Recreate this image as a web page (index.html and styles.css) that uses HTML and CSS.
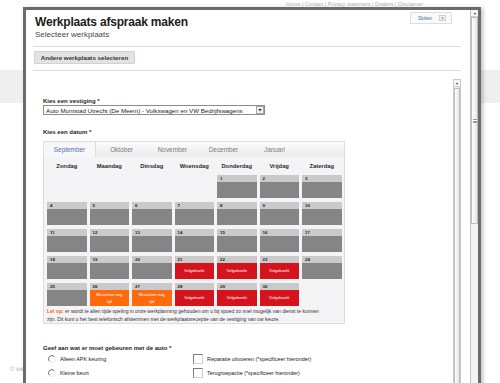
FILE: index.html
```html
<!DOCTYPE html>
<html lang="nl">
<head>
<meta charset="utf-8">
<title>Werkplaats afspraak maken</title>
<link rel="stylesheet" href="styles.css">
</head>
<body>
<div class="page">
  <div class="topnav">Home | Contact | Privacy statement | Dealers | Disclaimer</div>
  <div class="band"></div>
  <div class="copyright">© Volkswagen</div>
</div>

<div class="dialog">
  <div class="dialog-main">
    <div class="dlg-head">
      <div class="titles">
        <div class="title">Werkplaats afspraak maken</div>
        <div class="subtitle">Selecteer werkplaats</div>
      </div>
      <div class="close-btn"><span>Sluiten</span><span class="close-x">×</span></div>
    </div>
    <div class="rule"></div>
    <div class="btn">Andere werkplaats selecteren</div>
    <div class="rule rule-2"></div>

    <div class="scroll-area">
      <div class="content">
        <div class="label">Kies een vestiging *</div>
        <div class="select">
          <span class="select-text">Auto Muntstad Utrecht (De Meem) - Volkswagen en VW Bedrijfswagens</span>
          <span class="select-arrow"><svg width="6" height="6" viewBox="0 0 6 6"><path d="M1.2 2 L4.8 2 L3 4.2 Z" fill="#333"/></svg></span>
        </div>

        <div class="label label-date">Kies een datum *</div>
        <div class="tabs">
          <div class="tab active">September</div>
          <div class="tab">Oktober</div>
          <div class="tab">November</div>
          <div class="tab">December</div>
          <div class="tab">Januari</div>
        </div>
        <div class="calendar">
          <div class="dow">
            <div>Zondag</div><div>Maandag</div><div>Dinsdag</div><div>Woensdag</div><div>Donderdag</div><div>Vrijdag</div><div>Zaterdag</div>
          </div>
          <div class="days">
            <div class="empty"></div><div class="empty"></div><div class="empty"></div><div class="empty"></div>
            <div class="day"><div class="num">1</div><div class="body"></div></div>
            <div class="day"><div class="num">2</div><div class="body"></div></div>
            <div class="day"><div class="num">3</div><div class="body"></div></div>

            <div class="day"><div class="num">4</div><div class="body"></div></div>
            <div class="day"><div class="num">5</div><div class="body"></div></div>
            <div class="day"><div class="num">6</div><div class="body"></div></div>
            <div class="day"><div class="num">7</div><div class="body"></div></div>
            <div class="day"><div class="num">8</div><div class="body"></div></div>
            <div class="day"><div class="num">9</div><div class="body"></div></div>
            <div class="day"><div class="num">10</div><div class="body"></div></div>

            <div class="day"><div class="num">11</div><div class="body"></div></div>
            <div class="day"><div class="num">12</div><div class="body"></div></div>
            <div class="day"><div class="num">13</div><div class="body"></div></div>
            <div class="day"><div class="num">14</div><div class="body"></div></div>
            <div class="day"><div class="num">15</div><div class="body"></div></div>
            <div class="day"><div class="num">16</div><div class="body"></div></div>
            <div class="day"><div class="num">17</div><div class="body"></div></div>

            <div class="day"><div class="num">18</div><div class="body"></div></div>
            <div class="day"><div class="num">19</div><div class="body"></div></div>
            <div class="day"><div class="num">20</div><div class="body"></div></div>
            <div class="day"><div class="num">21</div><div class="body full">Volgeboekt</div></div>
            <div class="day"><div class="num">22</div><div class="body full">Volgeboekt</div></div>
            <div class="day"><div class="num">23</div><div class="body full">Volgeboekt</div></div>
            <div class="day"><div class="num">24</div><div class="body"></div></div>

            <div class="day"><div class="num">25</div><div class="body"></div></div>
            <div class="day"><div class="num">26</div><div class="body maybe">Misschien nog<br>tijd</div></div>
            <div class="day"><div class="num">27</div><div class="body maybe">Misschien nog<br>tijd</div></div>
            <div class="day"><div class="num">28</div><div class="body full">Volgeboekt</div></div>
            <div class="day"><div class="num">29</div><div class="body full">Volgeboekt</div></div>
            <div class="day"><div class="num">30</div><div class="body full">Volgeboekt</div></div>
            <div class="empty"></div>
          </div>
          <div class="note"><b>Let op:</b> er wordt te allen tijde speling in onze werkplanning gehouden om u bij spoed zo snel mogelijk van dienst te kunnen<br>zijn. Dit kunt u het best telefonisch afstemmen met de werkplaatsreceptie van de vestiging van uw keuze.</div>
        </div>

        <div class="label label-work">Geef aan wat er moet gebeuren met de auto *</div>
        <div class="opts">
          <div class="opt"><svg class="radio" width="8" height="8" viewBox="0 0 8 8"><circle cx="4" cy="4" r="3.3" fill="none" stroke="#e4e4e4" stroke-width="0.8"/><path d="M6.2 1.6 A3.3 3.3 0 1 0 1.4 6.2" fill="none" stroke="#6a6a6a" stroke-width="0.9"/></svg><span>Alleen APK keuring</span></div>
          <div class="opt"><span class="check"></span><span>Reparatie uitvoeren (*specificeer hieronder)</span></div>
          <div class="opt"><svg class="radio" width="8" height="8" viewBox="0 0 8 8"><circle cx="4" cy="4" r="3.3" fill="none" stroke="#e4e4e4" stroke-width="0.8"/><path d="M6.2 1.6 A3.3 3.3 0 1 0 1.4 6.2" fill="none" stroke="#6a6a6a" stroke-width="0.9"/></svg><span>Kleine beurt</span></div>
          <div class="opt"><span class="check"></span><span>Terugroepactie (*specificeer hieronder)</span></div>
        </div>
      </div>
      <div class="inner-scroll">
        <div class="sb-btn"><svg width="6" height="5" viewBox="0 0 6 5"><path d="M1.5 3.3 L4.5 3.3 L3 1.6 Z" fill="#555"/></svg></div>
        <div class="sb-thumb"></div>
      </div>
    </div>
  </div>
  <div class="outer-scroll">
    <div class="sb-btn"><svg width="6" height="5" viewBox="0 0 6 5"><path d="M1.5 3.3 L4.5 3.3 L3 1.6 Z" fill="#555"/></svg></div>
    <div class="outer-thumb"><span class="grip"></span></div>
    <div class="outer-track"></div>
  </div>
</div>
</body>
</html>
```

FILE: styles.css
```css
* { box-sizing: border-box; }
html, body { margin: 0; padding: 0; }
body {
  width: 500px;
  height: 383px;
  overflow: hidden;
  position: relative;
  background: #fff;
  font-family: "Liberation Sans", Arial, sans-serif;
  color: #222;
}

/* background page */
.page { height: 383px; }
.topnav {
  height: 8px;
  padding: 1px 0 0 286px;
  font-size: 5.4px;
  line-height: 6px;
  color: #b4b4b4;
  white-space: nowrap;
}
.band { margin-top: 62px; height: 33px; background: #efefef; }
.copyright {
  margin-top: 263px;
  padding-left: 10px;
  font-size: 5.5px;
  line-height: 7px;
  color: #a6a6a6;
}

/* dialog overlay */
.dialog {
  position: absolute;
  left: 23px;
  top: 7px;
  right: 19px;
  bottom: -4px;
  border: 3px solid #6c6c6c;
  border-bottom: 0;
  background: #fff;
  display: flex;
  box-shadow: 2px 1px 4px rgba(0, 0, 0, 0.25);
}
.dialog-main {
  flex: 1;
  min-width: 0;
  display: flex;
  flex-direction: column;
}
.dlg-head {
  display: flex;
  justify-content: space-between;
  align-items: flex-start;
  padding-top: 2px;
}
.titles { padding: 3px 0 0 9px; }
.title {
  font-size: 12px;
  line-height: 15px;
  font-weight: bold;
  color: #1c1c1c;
  letter-spacing: -0.2px;
}
.subtitle { font-size: 8px; line-height: 10px; color: #484848; }
.close-btn {
  margin-right: 18px;
  width: 42px;
  height: 12px;
  border: 1px solid #dedede;
  background: #fafafa;
  display: flex;
  align-items: center;
  justify-content: flex-end;
  gap: 7px;
  padding-right: 5px;
  font-size: 4.6px;
  color: #3a5d9c;
}
.close-x {
  width: 7px;
  height: 6px;
  border: 1px solid #cfcfcf;
  background: #f2f2f2;
  font-size: 5px;
  line-height: 4px;
  text-align: center;
  color: #777;
}
.rule { height: 1px; background: #dcdcdc; margin: 6px 9px 0 7px; }
.rule-2 { margin-top: 6px; }
.btn {
  margin: 4px 0 0 8px;
  width: 101px;
  height: 13px;
  background: #e3e3e3;
  border: 1px solid #d2d2d2;
  border-radius: 1px;
  font-size: 6.2px;
  line-height: 11px;
  font-weight: bold;
  text-align: center;
  color: #333;
}

/* scrolling content */
.scroll-area {
  flex: 1;
  min-height: 0;
  display: flex;
  margin-top: 8px;
}
.content {
  flex: 1;
  min-width: 0;
  padding: 18px 0 0 17px;
  overflow: hidden;
}
.label {
  font-size: 6px;
  line-height: 8px;
  font-weight: bold;
  color: #1e1e1e;
}
.select {
  width: 222px;
  height: 10px;
  border: 1px solid #8c8c8c;
  display: flex;
  align-items: center;
  padding-left: 2px;
  font-size: 6.2px;
  color: #222;
  background: #fff;
}
.select-text { flex: 1; white-space: nowrap; overflow: hidden; }
.select-arrow {
  width: 8px;
  height: 8px;
  border: 1px solid #a8a8a8;
  background: #eeeeee;
  display: flex;
  align-items: center;
  justify-content: center;
}
.label-date { margin-top: 13px; }
.tabs {
  margin-top: 5px;
  width: 302px;
  height: 16px;
  display: flex;
  border: 1px solid #e0e0e0;
  border-bottom: 0;
  background: linear-gradient(#fbfbfb, #ebebed);
}
.tab {
  width: 51px;
  text-align: center;
  font-size: 6.4px;
  line-height: 15px;
  color: #7a7a7a;
}
.tab.active {
  width: 52px;
  background: #f7f7f9;
  color: #4d77b3;
  border-right: 1px solid #dcdcdc;
}
.calendar {
  width: 302px;
  border: 1px solid #dcdcdc;
  border-top: 0;
  background: #f4f4f6;
  padding: 3px 3px 0 3px;
}
.dow, .days {
  display: grid;
  grid-template-columns: repeat(7, 39.5px);
  column-gap: 3px;
}
.dow {
  height: 10px;
  margin-top: 1px;
  margin-bottom: 4px;
  font-size: 5.8px;
  line-height: 10px;
  font-weight: bold;
  text-align: center;
  color: #2a2a2a;
}
.days { row-gap: 4px; grid-auto-rows: 23px; }
.day { display: flex; flex-direction: column; }
.num {
  height: 7px;
  background: #cacaca;
  font-size: 4.4px;
  line-height: 7px;
  font-weight: bold;
  padding-left: 3px;
  color: #222;
}
.body {
  flex: 1;
  background: #858585;
  color: #fff;
  font-size: 4.1px;
  text-align: center;
  display: flex;
  align-items: center;
  justify-content: center;
  line-height: 7.5px;
}
.body.full { background: #d4131c; }
.body.maybe { background: #ff6a0d; }
.note {
  margin-top: 1px;
  font-size: 5px;
  line-height: 8px;
  color: #333;
  white-space: nowrap;
}
.note b { color: #f06a10; }
.label-work { margin-top: 20px; }
.opts {
  display: grid;
  grid-template-columns: 150px 1fr;
  grid-auto-rows: 14px;
  font-size: 5.4px;
  color: #222;
}
.opt { display: flex; align-items: center; }
.radio { margin: 0 4px 0 5px; flex: none; }
.check {
  width: 10px;
  height: 10px;
  margin-right: 4px;
  border: 1px solid;
  border-color: #7c7c7c #cfcfcf #cfcfcf #7c7c7c;
  background: #fff;
  flex: none;
}

/* scrollbars */
.inner-scroll {
  width: 8px;
  margin-right: 9px;
  border: 1px solid #c9c9c9;
  background: #ececec;
  display: flex;
  flex-direction: column;
}
.sb-btn {
  height: 7px;
  display: flex;
  align-items: center;
  justify-content: center;
  background: #f7f7f7;
  border-bottom: 1px solid #d0d0d0;
}
.sb-thumb {
  flex: 1;
  margin-top: 1px;
  background: linear-gradient(to right, #ffffff, #e4e4e4);
  border: 1px solid #bdbdbd;
}
.outer-scroll {
  width: 8px;
  border-left: 1px solid #c4c4c4;
  background: #f1f1f1;
  display: flex;
  flex-direction: column;
}
.outer-thumb {
  height: 207px;
  background: linear-gradient(to right, #ffffff, #e6e6e6);
  border: 1px solid #bcbcbc;
  display: flex;
  align-items: center;
  justify-content: center;
}
.grip {
  width: 4px;
  height: 4px;
  border-top: 1px solid #999;
  border-bottom: 1px solid #999;
  background: linear-gradient(#fff 0 1px, #999 1px 2px, #fff 2px);
}
.outer-track { flex: 1; background: #f3f3f3; }
```
